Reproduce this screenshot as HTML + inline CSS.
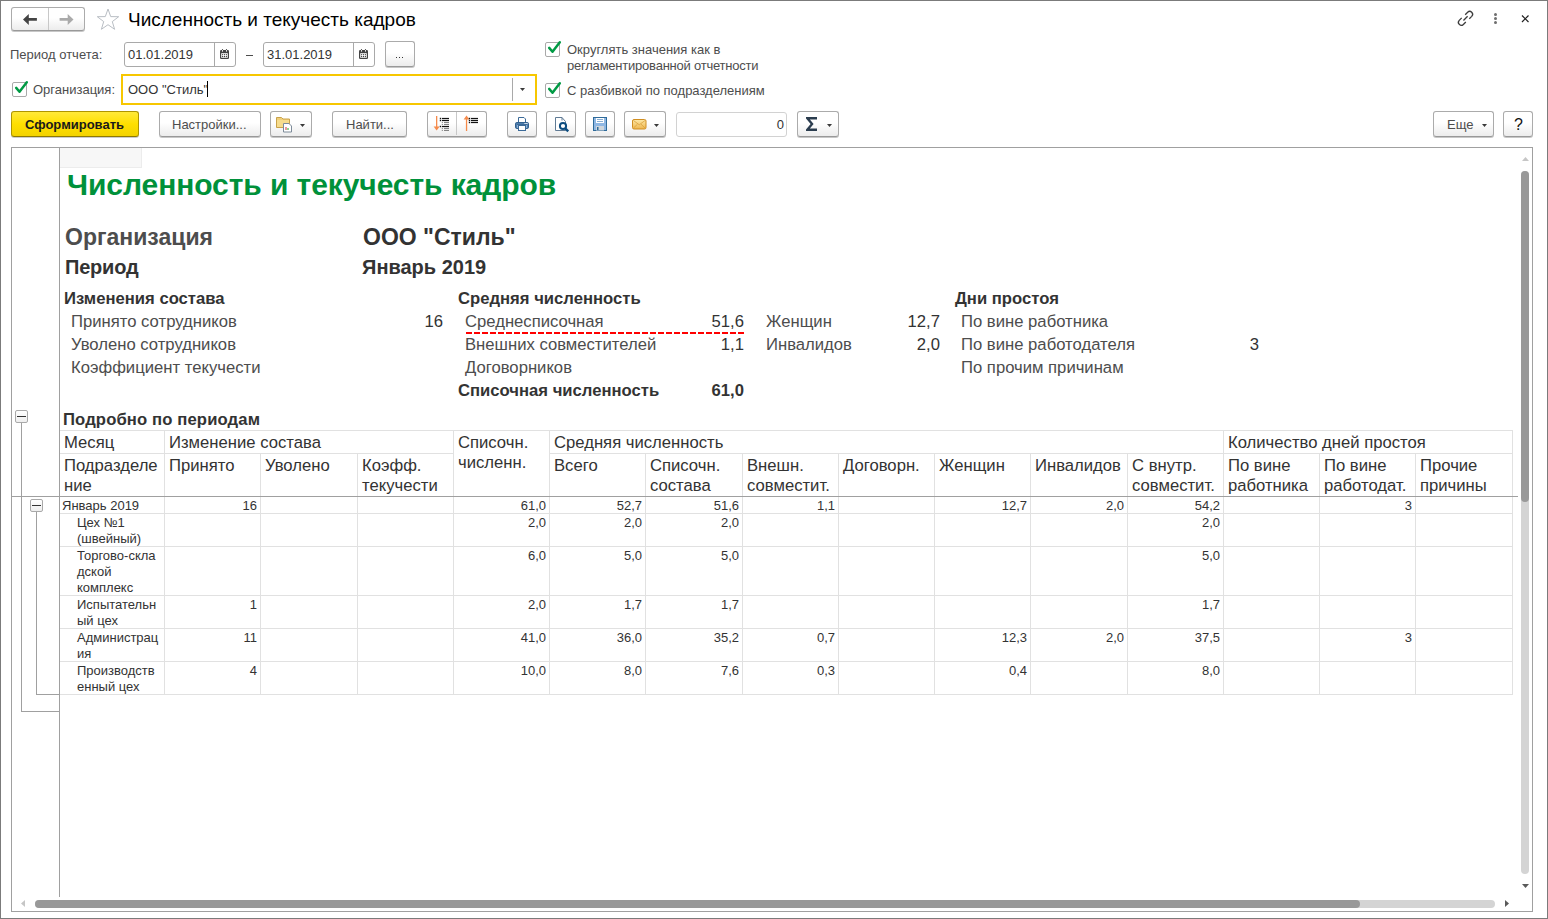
<!DOCTYPE html>
<html><head><meta charset="utf-8"><title>Численность и текучесть кадров</title><style>
*{margin:0;padding:0;box-sizing:border-box}
html,body{width:1548px;height:919px;overflow:hidden;background:#fff}
body{position:relative;font-family:"Liberation Sans",sans-serif}
.t{position:absolute;white-space:nowrap;line-height:20px}
.r{position:absolute}
.btn{position:absolute;border:1px solid #ababab;border-radius:3px;background:linear-gradient(#fff 0%,#fff 45%,#ececec 100%);border-bottom-color:#999;box-shadow:0 1px 0 rgba(0,0,0,.22)}
svg{position:absolute;overflow:visible}
</style></head>
<body>
<div class="r" style="left:0px;top:0px;width:1548px;height:919px;border:1px solid #7b7b7b"></div>
<div class="btn" style="left:11px;top:7px;width:74px;height:24px"></div>
<div class="r" style="left:48px;top:8px;width:1px;height:22px;background:#c8c8c8"></div>
<svg style="left:22px;top:13px" width="16" height="13"><path d="M1 6.4 L6.8 0.9 L6.8 5 L14.9 5 L14.9 7.8 L6.8 7.8 L6.8 12 Z" fill="#444"/></svg>
<svg style="left:59px;top:13px" width="16" height="13"><path d="M14.5 6.4 L8.7 0.9 L8.7 5 L0.6 5 L0.6 7.8 L8.7 7.8 L8.7 12 Z" fill="#aaa"/></svg>
<svg style="left:96px;top:8px" width="24" height="23"><path d="M12 1 L14.7 8.6 L22.7 8.7 L16.3 13.6 L18.6 21.3 L12 16.7 L5.4 21.3 L7.7 13.6 L1.3 8.7 L9.3 8.6 Z" fill="none" stroke="#b9bec4" stroke-width="1"/></svg>
<div class="t" style="left:128px;top:10px;font-size:19px;color:#000;">Численность и текучесть кадров</div>
<svg style="left:1454px;top:8px" width="22" height="22"><g fill="none" stroke="#3c3c3c" stroke-width="1.3"><path d="M9.45 12.44 L13.6 8.25"/><path d="M11.2 6.7 L13.65 4.25 A2.9 2.9 0 0 1 17.75 8.35 L15.3 10.8"/><path d="M11.8 13.95 L9.35 16.45 A2.9 2.9 0 0 1 5.25 12.35 L7.7 9.9"/></g></svg>
<div class="r" style="left:1494px;top:13px;width:3px;height:3px;background:#6e6e6e;border-radius:50%"></div>
<div class="r" style="left:1494px;top:17px;width:3px;height:3px;background:#6e6e6e;border-radius:50%"></div>
<div class="r" style="left:1494px;top:21px;width:3px;height:3px;background:#6e6e6e;border-radius:50%"></div>
<svg style="left:1521px;top:14px" width="9" height="9"><path d="M1 1.5 L7.5 8 M7.5 1.5 L1 8" stroke="#222" stroke-width="1.2"/></svg>
<div class="t" style="left:10px;top:45px;font-size:13px;color:#4d4d4d;">Период отчета:</div>
<div class="r" style="left:124px;top:42px;width:112px;height:25px;border:1px solid #a9a9a9;border-radius:3px;background:#fff"></div>
<div class="r" style="left:214px;top:43px;width:1px;height:23px;background:#a9a9a9"></div>
<div class="t" style="left:128px;top:45px;font-size:13px;color:#333;">01.01.2019</div>
<svg style="left:220px;top:49px" width="9" height="10"><rect x="0" y="1" width="9" height="9" rx="1.3" fill="#444"/><rect x="1.2" y="4.2" width="6.6" height="4.6" fill="#fff"/><rect x="2" y="1" width="1" height="1.6" fill="#fff"/><rect x="6" y="1" width="1" height="1.6" fill="#fff"/><g fill="#444"><circle cx="2.5" cy="0.6" r="0.6"/><circle cx="6.5" cy="0.6" r="0.6"/><circle cx="2.6" cy="5.6" r="0.65"/><circle cx="4.5" cy="5.6" r="0.65"/><circle cx="6.4" cy="5.6" r="0.65"/><circle cx="2.6" cy="7.5" r="0.65"/><circle cx="4.5" cy="7.5" r="0.65"/><circle cx="6.4" cy="7.5" r="0.65"/></g></svg>
<div class="r" style="left:246px;top:55px;width:7px;height:1px;background:#4d4d4d"></div>
<div class="r" style="left:263px;top:42px;width:112px;height:25px;border:1px solid #a9a9a9;border-radius:3px;background:#fff"></div>
<div class="r" style="left:353px;top:43px;width:1px;height:23px;background:#a9a9a9"></div>
<div class="t" style="left:267px;top:45px;font-size:13px;color:#333;">31.01.2019</div>
<svg style="left:359px;top:49px" width="9" height="10"><rect x="0" y="1" width="9" height="9" rx="1.3" fill="#444"/><rect x="1.2" y="4.2" width="6.6" height="4.6" fill="#fff"/><rect x="2" y="1" width="1" height="1.6" fill="#fff"/><rect x="6" y="1" width="1" height="1.6" fill="#fff"/><g fill="#444"><circle cx="2.5" cy="0.6" r="0.6"/><circle cx="6.5" cy="0.6" r="0.6"/><circle cx="2.6" cy="5.6" r="0.65"/><circle cx="4.5" cy="5.6" r="0.65"/><circle cx="6.4" cy="5.6" r="0.65"/><circle cx="2.6" cy="7.5" r="0.65"/><circle cx="4.5" cy="7.5" r="0.65"/><circle cx="6.4" cy="7.5" r="0.65"/></g></svg>
<div class="btn" style="left:385px;top:41px;width:30px;height:26px"></div>
<div class="r" style="left:396px;top:57px;width:1px;height:1px;background:#333"></div>
<div class="r" style="left:399px;top:57px;width:1px;height:1px;background:#333"></div>
<div class="r" style="left:402px;top:57px;width:1px;height:1px;background:#333"></div>
<div class="r" style="left:545px;top:42px;width:15px;height:15px;border:1px solid #a9a9a9;border-radius:2px;background:#fff"></div>
<svg style="left:545px;top:42px" width="17" height="15"><path d="M4.2 5.9 L7.5 9.7 L14.8 0.3" fill="none" stroke="#009a44" stroke-width="2.5" stroke-linecap="round" stroke-linejoin="round"/></svg>
<div class="t" style="left:567px;top:40px;font-size:13px;color:#4d4d4d;">Округлять значения как в</div>
<div class="t" style="left:567px;top:56px;font-size:13px;color:#4d4d4d;letter-spacing:-0.22px">регламентированной отчетности</div>
<div class="r" style="left:12px;top:82px;width:15px;height:15px;border:1px solid #a9a9a9;border-radius:2px;background:#fff"></div>
<svg style="left:12px;top:82px" width="17" height="15"><path d="M4.2 5.9 L7.5 9.7 L14.8 0.3" fill="none" stroke="#009a44" stroke-width="2.5" stroke-linecap="round" stroke-linejoin="round"/></svg>
<div class="t" style="left:33px;top:80px;font-size:13px;color:#4d4d4d;">Организация:</div>
<div class="r" style="left:121px;top:74px;width:416px;height:31px;border:2px solid #f7c700;background:#fff"></div>
<div class="t" style="left:128px;top:80px;font-size:13px;color:#333;">ООО &quot;Стиль&quot;</div>
<div class="r" style="left:207px;top:81px;width:1px;height:16px;background:#000"></div>
<div class="r" style="left:512px;top:78px;width:1px;height:23px;background:#a9a9a9"></div>
<svg style="left:520px;top:88px" width="5" height="3"><path d="M0 0 L5 0 L2.5 3 Z" fill="#3a3a3a"/></svg>
<div class="r" style="left:545px;top:83px;width:15px;height:15px;border:1px solid #a9a9a9;border-radius:2px;background:#fff"></div>
<svg style="left:545px;top:83px" width="17" height="15"><path d="M4.2 5.9 L7.5 9.7 L14.8 0.3" fill="none" stroke="#009a44" stroke-width="2.5" stroke-linecap="round" stroke-linejoin="round"/></svg>
<div class="t" style="left:567px;top:81px;font-size:13px;color:#4d4d4d;">С разбивкой по подразделениям</div>
<div class="r" style="left:11px;top:111px;width:128px;height:26px;border:1px solid #ae9500;border-bottom-color:#8f7a00;border-radius:3px;background:linear-gradient(#ffe93a,#ffdf00 50%,#f3d300);box-shadow:0 1px 0 rgba(0,0,0,.2)"></div>
<div class="t" style="left:25px;top:115px;font-size:13px;font-weight:bold;color:#1a1a1a;">Сформировать</div>
<div class="btn" style="left:159px;top:111px;width:102px;height:26px"></div>
<div class="t" style="left:172px;top:115px;font-size:13px;color:#4d4d4d;">Настройки...</div>
<div class="btn" style="left:270px;top:111px;width:42px;height:26px"></div>
<svg style="left:276px;top:115px" width="18" height="18"><path d="M0.5 2.5 L5.5 2.5 L7 4 L13.5 4 L13.5 12.5 L0.5 12.5 Z" fill="#f0cf7a" stroke="#c9a24a"/><rect x="1" y="5" width="12" height="7" fill="#f7dc8c"/><path d="M7.5 8.5 L13 8.5 L15.5 11 L15.5 17 L7.5 17 Z" fill="#fff" stroke="#7d8b99"/><rect x="9.5" y="12" width="1" height="3" fill="#d33"/><rect x="11.5" y="13" width="1" height="2" fill="#2a2"/></svg>
<svg style="left:300px;top:124px" width="5" height="3"><path d="M0 0 L5 0 L2.5 3 Z" fill="#3a3a3a"/></svg>
<div class="btn" style="left:332px;top:111px;width:75px;height:26px"></div>
<div class="t" style="left:346px;top:115px;font-size:13px;color:#4d4d4d;">Найти...</div>
<div class="btn" style="left:427px;top:111px;width:60px;height:26px"></div>
<div class="r" style="left:456px;top:112px;width:1px;height:23px;background:#c8c8c8"></div>
<svg style="left:427px;top:111px" width="60" height="25"><g fill="#f58a4b"><rect x="9" y="5" width="1.3" height="12"/><path d="M6.6 15.6 L12.7 15.6 L9.65 19.6 Z"/><rect x="38.9" y="7" width="1.3" height="13"/><path d="M36.6 8.4 L42.5 8.4 L39.55 4.6 Z"/></g><g fill="#111"><rect x="12.8" y="6.8" width="1.4" height="1.4"/><rect x="15" y="6.9" width="7" height="1.2"/><rect x="12.8" y="8.8" width="1.4" height="1.4"/><rect x="15" y="8.9" width="7" height="1.2"/><rect x="12.8" y="14.8" width="1.4" height="1.4"/><rect x="15" y="14.9" width="7" height="1.2"/><rect x="41.8" y="6.8" width="1.4" height="1.4"/><rect x="44" y="6.9" width="7" height="1.2"/><rect x="41.8" y="8.8" width="1.4" height="1.4"/><rect x="44" y="8.9" width="7" height="1.2"/><rect x="41.8" y="10.8" width="1.4" height="1.4"/><rect x="44" y="10.9" width="7" height="1.2"/></g><g fill="#777"><rect x="14.8" y="10.9" width="1" height="1"/><rect x="17" y="10.9" width="5" height="1"/><rect x="14.8" y="12.9" width="1" height="1"/><rect x="17" y="12.9" width="5" height="1"/><rect x="14.8" y="16.9" width="1" height="1"/><rect x="17" y="16.9" width="5" height="1"/><rect x="14.8" y="18.9" width="1" height="1"/><rect x="17" y="18.9" width="5" height="1"/></g></svg>
<div class="btn" style="left:507px;top:111px;width:30px;height:26px"></div>
<div class="btn" style="left:546px;top:111px;width:30px;height:26px"></div>
<div class="btn" style="left:585px;top:111px;width:30px;height:26px"></div>
<svg style="left:514px;top:116px" width="16" height="16"><path d="M4.5 1.5 L10 1.5 L11.5 3 L11.5 6.5 L4.5 6.5 Z" fill="#fff" stroke="#3b6a98"/><rect x="1.5" y="6.5" width="13" height="6" rx="1.3" fill="#4f7fae" stroke="#33618f"/><rect x="3" y="8.5" width="10" height="3.5" fill="#8db0d6"/><rect x="3" y="8" width="10" height="0.8" fill="#33618f"/><rect x="10.5" y="7" width="1.2" height="1" fill="#fff"/><rect x="12.3" y="7" width="1.2" height="1" fill="#fff"/><rect x="4.5" y="9.5" width="7" height="5" fill="#fff" stroke="#3b6a98"/></svg>
<svg style="left:555px;top:117px" width="16" height="16"><path d="M0.5 0.5 L7 0.5 L10.5 4.5 L10.5 13.5 L0.5 13.5 Z" fill="#fff" stroke="#5f7a94"/><path d="M7 0.5 L7 3.5" stroke="#5f7a94"/><circle cx="8" cy="9" r="3.1" fill="#fff" stroke="#0d4d80" stroke-width="2"/><path d="M10.2 11.3 L13.2 14.3" stroke="#0d4d80" stroke-width="2.4"/></svg>
<svg style="left:593px;top:117px" width="14" height="14"><rect x="0.5" y="0.5" width="13" height="13" fill="#8fb7e3" stroke="#2f6b9a"/><rect x="3" y="1" width="8" height="5" fill="#fff"/><rect x="4" y="2.2" width="6" height="0.8" fill="#6d9cc9"/><rect x="4" y="4" width="6" height="0.8" fill="#6d9cc9"/><rect x="3" y="9" width="8" height="4.5" fill="#cfd6dc"/><rect x="4" y="10" width="1.5" height="3" fill="#2f6b9a"/></svg>
<div class="btn" style="left:624px;top:111px;width:42px;height:26px"></div>
<svg style="left:632px;top:119px" width="15" height="11"><defs><linearGradient id="eg" x1="0" y1="0" x2="0" y2="1"><stop offset="0" stop-color="#fde9a8"/><stop offset="1" stop-color="#eeb64e"/></linearGradient></defs><rect x="0.5" y="0.5" width="13.5" height="9.5" rx="1.5" fill="url(#eg)" stroke="#d08e22"/><path d="M1.5 1.5 L7.25 5.8 L13 1.5 M1.5 9 L5.5 5.2 M13 9 L9 5.2" fill="none" stroke="#d9a03c" stroke-width="0.8"/></svg>
<svg style="left:654px;top:124px" width="5" height="3"><path d="M0 0 L5 0 L2.5 3 Z" fill="#3a3a3a"/></svg>
<div class="r" style="left:676px;top:112px;width:111px;height:25px;border:1px solid #d2d2d2;border-radius:3px;background:#fff"></div>
<div class="t" style="right:764px;top:115px;font-size:13px;color:#333;">0</div>
<div class="btn" style="left:797px;top:111px;width:42px;height:26px"></div>
<svg style="left:805px;top:116px" width="13" height="16"><path d="M1 1 L12 1 L12 3.4 L4.9 3.4 L8.6 8 L4.9 12.6 L12 12.6 L12 15 L1 15 L1 13.4 L5.6 8 L1 2.6 Z" fill="#2b3d4f"/></svg>
<svg style="left:827px;top:124px" width="5" height="3"><path d="M0 0 L5 0 L2.5 3 Z" fill="#3a3a3a"/></svg>
<div class="btn" style="left:1433px;top:111px;width:61px;height:26px"></div>
<div class="t" style="left:1447px;top:115px;font-size:13px;color:#4d4d4d;">Еще</div>
<svg style="left:1482px;top:124px" width="5" height="3"><path d="M0 0 L5 0 L2.5 3 Z" fill="#3a3a3a"/></svg>
<div class="btn" style="left:1503px;top:111px;width:30px;height:26px"></div>
<div class="t" style="left:1514px;top:115px;font-size:16px;color:#111;">?</div>
<div class="r" style="left:11px;top:147px;width:1522px;height:765px;border:1px solid #a0a0a0"></div>
<div class="r" style="left:59px;top:148px;width:1px;height:749px;background:#a0a0a0"></div>
<div class="r" style="left:60px;top:148px;width:82px;height:20px;background:#f7f7f7;border-right:1px solid #ececec;border-bottom:1px solid #ececec"></div>
<svg style="left:1522px;top:157px" width="7" height="4"><path d="M0 4 L3.5 0 L7 4 Z" fill="#c6c6c6"/></svg>
<div class="r" style="left:1521px;top:171px;width:8px;height:703px;background:#d4d4d4;border-radius:4px"></div>
<div class="r" style="left:1521px;top:171px;width:8px;height:331px;background:#999;border-radius:4px"></div>
<svg style="left:1522px;top:884px" width="7" height="4"><path d="M0 0 L7 0 L3.5 4 Z" fill="#5a5a5a"/></svg>
<svg style="left:21px;top:900px" width="4" height="7"><path d="M4 0 L4 7 L0 3.5 Z" fill="#c6c6c6"/></svg>
<div class="r" style="left:35px;top:900px;width:1460px;height:8px;background:#d4d4d4;border-radius:4px"></div>
<div class="r" style="left:35px;top:900px;width:1325px;height:8px;background:#999;border-radius:4px"></div>
<svg style="left:1505px;top:900px" width="4" height="7"><path d="M0 0 L0 7 L4 3.5 Z" fill="#5a5a5a"/></svg>
<div class="t" style="left:67px;top:175px;font-size:30px;font-weight:bold;color:#00913a;letter-spacing:-0.08px">Численность и текучесть кадров</div>
<div class="t" style="left:65px;top:227px;font-size:23px;font-weight:bold;color:#4d4d4d;">Организация</div>
<div class="t" style="left:363px;top:227px;font-size:23px;font-weight:bold;color:#333;">ООО &quot;Стиль&quot;</div>
<div class="t" style="left:65px;top:257px;font-size:20px;font-weight:bold;color:#333;letter-spacing:-0.2px">Период</div>
<div class="t" style="left:362px;top:257px;font-size:20px;font-weight:bold;color:#333;">Январь 2019</div>
<div class="t" style="left:64px;top:289px;font-size:16.67px;font-weight:bold;color:#333;">Изменения состава</div>
<div class="t" style="left:71px;top:312px;font-size:16.67px;color:#4d4d4d;">Принято сотрудников</div>
<div class="t" style="right:1105px;top:312px;font-size:16.67px;color:#333;">16</div>
<div class="t" style="left:71px;top:335px;font-size:16.67px;color:#4d4d4d;">Уволено сотрудников</div>
<div class="t" style="left:71px;top:358px;font-size:16.67px;color:#4d4d4d;">Коэффициент текучести</div>
<div class="t" style="left:458px;top:289px;font-size:16.67px;font-weight:bold;color:#333;">Средняя численность</div>
<div class="t" style="left:465px;top:312px;font-size:16.67px;color:#4d4d4d;">Среднесписочная</div>
<div class="t" style="right:804px;top:312px;font-size:16.67px;color:#333;">51,6</div>
<div class="r" style="left:466px;top:332px;width:278px;height:2px;background:repeating-linear-gradient(90deg,#f00 0 6px,transparent 6px 8px)"></div>
<div class="t" style="left:465px;top:335px;font-size:16.67px;color:#4d4d4d;">Внешних совместителей</div>
<div class="t" style="right:804px;top:335px;font-size:16.67px;color:#333;">1,1</div>
<div class="t" style="left:465px;top:358px;font-size:16.67px;color:#4d4d4d;">Договорников</div>
<div class="t" style="left:458px;top:381px;font-size:16.67px;font-weight:bold;color:#333;">Списочная численность</div>
<div class="t" style="right:804px;top:381px;font-size:16.67px;font-weight:bold;color:#333;">61,0</div>
<div class="t" style="left:766px;top:312px;font-size:16.67px;color:#4d4d4d;">Женщин</div>
<div class="t" style="right:608px;top:312px;font-size:16.67px;color:#333;">12,7</div>
<div class="t" style="left:766px;top:335px;font-size:16.67px;color:#4d4d4d;">Инвалидов</div>
<div class="t" style="right:608px;top:335px;font-size:16.67px;color:#333;">2,0</div>
<div class="t" style="left:955px;top:289px;font-size:16.67px;font-weight:bold;color:#333;">Дни простоя</div>
<div class="t" style="left:961px;top:312px;font-size:16.67px;color:#4d4d4d;">По вине работника</div>
<div class="t" style="left:961px;top:335px;font-size:16.67px;color:#4d4d4d;">По вине работодателя</div>
<div class="t" style="right:289px;top:335px;font-size:16.67px;color:#333;">3</div>
<div class="t" style="left:961px;top:358px;font-size:16.67px;color:#4d4d4d;">По прочим причинам</div>
<div class="t" style="left:63px;top:410px;font-size:16.67px;font-weight:bold;color:#333;letter-spacing:0.12px">Подробно по периодам</div>
<div class="r" style="left:60px;top:430px;width:1453px;height:1px;background:#e1e1e1"></div>
<div class="r" style="left:60px;top:453px;width:393px;height:1px;background:#e1e1e1"></div>
<div class="r" style="left:550px;top:453px;width:963px;height:1px;background:#e1e1e1"></div>
<div class="r" style="left:164px;top:430px;width:1px;height:66px;background:#e1e1e1"></div>
<div class="r" style="left:453px;top:430px;width:1px;height:66px;background:#e1e1e1"></div>
<div class="r" style="left:549px;top:430px;width:1px;height:66px;background:#e1e1e1"></div>
<div class="r" style="left:1223px;top:430px;width:1px;height:66px;background:#e1e1e1"></div>
<div class="r" style="left:1512px;top:430px;width:1px;height:66px;background:#e1e1e1"></div>
<div class="r" style="left:260px;top:453px;width:1px;height:43px;background:#e1e1e1"></div>
<div class="r" style="left:357px;top:453px;width:1px;height:43px;background:#e1e1e1"></div>
<div class="r" style="left:645px;top:453px;width:1px;height:43px;background:#e1e1e1"></div>
<div class="r" style="left:742px;top:453px;width:1px;height:43px;background:#e1e1e1"></div>
<div class="r" style="left:838px;top:453px;width:1px;height:43px;background:#e1e1e1"></div>
<div class="r" style="left:934px;top:453px;width:1px;height:43px;background:#e1e1e1"></div>
<div class="r" style="left:1030px;top:453px;width:1px;height:43px;background:#e1e1e1"></div>
<div class="r" style="left:1127px;top:453px;width:1px;height:43px;background:#e1e1e1"></div>
<div class="r" style="left:1319px;top:453px;width:1px;height:43px;background:#e1e1e1"></div>
<div class="r" style="left:1415px;top:453px;width:1px;height:43px;background:#e1e1e1"></div>
<div class="r" style="left:11px;top:496px;width:1507px;height:1px;background:#a0a0a0"></div>
<div class="r" style="left:60px;top:513px;width:1453px;height:1px;background:#e1e1e1"></div>
<div class="r" style="left:60px;top:546px;width:1453px;height:1px;background:#e1e1e1"></div>
<div class="r" style="left:60px;top:595px;width:1453px;height:1px;background:#e1e1e1"></div>
<div class="r" style="left:60px;top:628px;width:1453px;height:1px;background:#e1e1e1"></div>
<div class="r" style="left:60px;top:661px;width:1453px;height:1px;background:#e1e1e1"></div>
<div class="r" style="left:60px;top:694px;width:1453px;height:1px;background:#e1e1e1"></div>
<div class="r" style="left:164px;top:497px;width:1px;height:197px;background:#e1e1e1"></div>
<div class="r" style="left:260px;top:497px;width:1px;height:197px;background:#e1e1e1"></div>
<div class="r" style="left:357px;top:497px;width:1px;height:197px;background:#e1e1e1"></div>
<div class="r" style="left:453px;top:497px;width:1px;height:197px;background:#e1e1e1"></div>
<div class="r" style="left:549px;top:497px;width:1px;height:197px;background:#e1e1e1"></div>
<div class="r" style="left:645px;top:497px;width:1px;height:197px;background:#e1e1e1"></div>
<div class="r" style="left:742px;top:497px;width:1px;height:197px;background:#e1e1e1"></div>
<div class="r" style="left:838px;top:497px;width:1px;height:197px;background:#e1e1e1"></div>
<div class="r" style="left:934px;top:497px;width:1px;height:197px;background:#e1e1e1"></div>
<div class="r" style="left:1030px;top:497px;width:1px;height:197px;background:#e1e1e1"></div>
<div class="r" style="left:1127px;top:497px;width:1px;height:197px;background:#e1e1e1"></div>
<div class="r" style="left:1223px;top:497px;width:1px;height:197px;background:#e1e1e1"></div>
<div class="r" style="left:1319px;top:497px;width:1px;height:197px;background:#e1e1e1"></div>
<div class="r" style="left:1415px;top:497px;width:1px;height:197px;background:#e1e1e1"></div>
<div class="r" style="left:1512px;top:497px;width:1px;height:197px;background:#e1e1e1"></div>
<div class="t" style="left:64px;top:433px;font-size:16.67px;color:#333;">Месяц</div>
<div class="t" style="left:169px;top:433px;font-size:16.67px;color:#333;">Изменение состава</div>
<div class="t" style="left:458px;top:433px;font-size:16.67px;color:#333;">Списочн.</div>
<div class="t" style="left:458px;top:453px;font-size:16.67px;color:#333;">численн.</div>
<div class="t" style="left:554px;top:433px;font-size:16.67px;color:#333;">Средняя численность</div>
<div class="t" style="left:1228px;top:433px;font-size:16.67px;color:#333;">Количество дней простоя</div>
<div class="t" style="left:64px;top:456px;font-size:16.67px;color:#333;">Подразделе</div>
<div class="t" style="left:64px;top:476px;font-size:16.67px;color:#333;">ние</div>
<div class="t" style="left:169px;top:456px;font-size:16.67px;color:#333;">Принято</div>
<div class="t" style="left:265px;top:456px;font-size:16.67px;color:#333;">Уволено</div>
<div class="t" style="left:362px;top:456px;font-size:16.67px;color:#333;">Коэфф.</div>
<div class="t" style="left:362px;top:476px;font-size:16.67px;color:#333;">текучести</div>
<div class="t" style="left:554px;top:456px;font-size:16.67px;color:#333;">Всего</div>
<div class="t" style="left:650px;top:456px;font-size:16.67px;color:#333;">Списочн.</div>
<div class="t" style="left:650px;top:476px;font-size:16.67px;color:#333;">состава</div>
<div class="t" style="left:747px;top:456px;font-size:16.67px;color:#333;">Внешн.</div>
<div class="t" style="left:747px;top:476px;font-size:16.67px;color:#333;">совместит.</div>
<div class="t" style="left:843px;top:456px;font-size:16.67px;color:#333;">Договорн.</div>
<div class="t" style="left:939px;top:456px;font-size:16.67px;color:#333;">Женщин</div>
<div class="t" style="left:1035px;top:456px;font-size:16.67px;color:#333;">Инвалидов</div>
<div class="t" style="left:1132px;top:456px;font-size:16.67px;color:#333;">С внутр.</div>
<div class="t" style="left:1132px;top:476px;font-size:16.67px;color:#333;">совместит.</div>
<div class="t" style="left:1228px;top:456px;font-size:16.67px;color:#333;">По вине</div>
<div class="t" style="left:1228px;top:476px;font-size:16.67px;color:#333;">работника</div>
<div class="t" style="left:1324px;top:456px;font-size:16.67px;color:#333;">По вине</div>
<div class="t" style="left:1324px;top:476px;font-size:16.67px;color:#333;">работодат.</div>
<div class="t" style="left:1420px;top:456px;font-size:16.67px;color:#333;">Прочие</div>
<div class="t" style="left:1420px;top:476px;font-size:16.67px;color:#333;">причины</div>
<div class="t" style="left:62px;top:496px;font-size:13px;color:#333;">Январь 2019</div>
<div class="t" style="right:1291px;top:496px;font-size:13px;color:#333;">16</div>
<div class="t" style="right:1002px;top:496px;font-size:13px;color:#333;">61,0</div>
<div class="t" style="right:906px;top:496px;font-size:13px;color:#333;">52,7</div>
<div class="t" style="right:809px;top:496px;font-size:13px;color:#333;">51,6</div>
<div class="t" style="right:713px;top:496px;font-size:13px;color:#333;">1,1</div>
<div class="t" style="right:521px;top:496px;font-size:13px;color:#333;">12,7</div>
<div class="t" style="right:424px;top:496px;font-size:13px;color:#333;">2,0</div>
<div class="t" style="right:328px;top:496px;font-size:13px;color:#333;">54,2</div>
<div class="t" style="right:136px;top:496px;font-size:13px;color:#333;">3</div>
<div class="t" style="left:77px;top:513px;font-size:13px;color:#333;">Цех №1</div>
<div class="t" style="left:77px;top:529px;font-size:13px;color:#333;">(швейный)</div>
<div class="t" style="right:1002px;top:513px;font-size:13px;color:#333;">2,0</div>
<div class="t" style="right:906px;top:513px;font-size:13px;color:#333;">2,0</div>
<div class="t" style="right:809px;top:513px;font-size:13px;color:#333;">2,0</div>
<div class="t" style="right:328px;top:513px;font-size:13px;color:#333;">2,0</div>
<div class="t" style="left:77px;top:546px;font-size:13px;color:#333;">Торгово-скла</div>
<div class="t" style="left:77px;top:562px;font-size:13px;color:#333;">дской</div>
<div class="t" style="left:77px;top:578px;font-size:13px;color:#333;">комплекс</div>
<div class="t" style="right:1002px;top:546px;font-size:13px;color:#333;">6,0</div>
<div class="t" style="right:906px;top:546px;font-size:13px;color:#333;">5,0</div>
<div class="t" style="right:809px;top:546px;font-size:13px;color:#333;">5,0</div>
<div class="t" style="right:328px;top:546px;font-size:13px;color:#333;">5,0</div>
<div class="t" style="left:77px;top:595px;font-size:13px;color:#333;">Испытательн</div>
<div class="t" style="left:77px;top:611px;font-size:13px;color:#333;">ый цех</div>
<div class="t" style="right:1291px;top:595px;font-size:13px;color:#333;">1</div>
<div class="t" style="right:1002px;top:595px;font-size:13px;color:#333;">2,0</div>
<div class="t" style="right:906px;top:595px;font-size:13px;color:#333;">1,7</div>
<div class="t" style="right:809px;top:595px;font-size:13px;color:#333;">1,7</div>
<div class="t" style="right:328px;top:595px;font-size:13px;color:#333;">1,7</div>
<div class="t" style="left:77px;top:628px;font-size:13px;color:#333;">Администрац</div>
<div class="t" style="left:77px;top:644px;font-size:13px;color:#333;">ия</div>
<div class="t" style="right:1291px;top:628px;font-size:13px;color:#333;">11</div>
<div class="t" style="right:1002px;top:628px;font-size:13px;color:#333;">41,0</div>
<div class="t" style="right:906px;top:628px;font-size:13px;color:#333;">36,0</div>
<div class="t" style="right:809px;top:628px;font-size:13px;color:#333;">35,2</div>
<div class="t" style="right:713px;top:628px;font-size:13px;color:#333;">0,7</div>
<div class="t" style="right:521px;top:628px;font-size:13px;color:#333;">12,3</div>
<div class="t" style="right:424px;top:628px;font-size:13px;color:#333;">2,0</div>
<div class="t" style="right:328px;top:628px;font-size:13px;color:#333;">37,5</div>
<div class="t" style="right:136px;top:628px;font-size:13px;color:#333;">3</div>
<div class="t" style="left:77px;top:661px;font-size:13px;color:#333;">Производств</div>
<div class="t" style="left:77px;top:677px;font-size:13px;color:#333;">енный цех</div>
<div class="t" style="right:1291px;top:661px;font-size:13px;color:#333;">4</div>
<div class="t" style="right:1002px;top:661px;font-size:13px;color:#333;">10,0</div>
<div class="t" style="right:906px;top:661px;font-size:13px;color:#333;">8,0</div>
<div class="t" style="right:809px;top:661px;font-size:13px;color:#333;">7,6</div>
<div class="t" style="right:713px;top:661px;font-size:13px;color:#333;">0,3</div>
<div class="t" style="right:521px;top:661px;font-size:13px;color:#333;">0,4</div>
<div class="t" style="right:328px;top:661px;font-size:13px;color:#333;">8,0</div>
<div class="r" style="left:15px;top:410px;width:13px;height:13px;border:1px solid #a9a9a9;border-radius:2px;background:linear-gradient(#fff,#eee)"></div>
<div class="r" style="left:17px;top:416px;width:9px;height:1px;background:#333"></div>
<div class="r" style="left:21px;top:423px;width:1px;height:289px;background:#a0a0a0"></div>
<div class="r" style="left:21px;top:711px;width:38px;height:1px;background:#a0a0a0"></div>
<div class="r" style="left:30px;top:499px;width:13px;height:13px;border:1px solid #a9a9a9;border-radius:2px;background:linear-gradient(#fff,#eee)"></div>
<div class="r" style="left:32px;top:505px;width:9px;height:1px;background:#333"></div>
<div class="r" style="left:36px;top:512px;width:1px;height:183px;background:#a0a0a0"></div>
<div class="r" style="left:36px;top:694px;width:23px;height:1px;background:#a0a0a0"></div>
</body></html>
